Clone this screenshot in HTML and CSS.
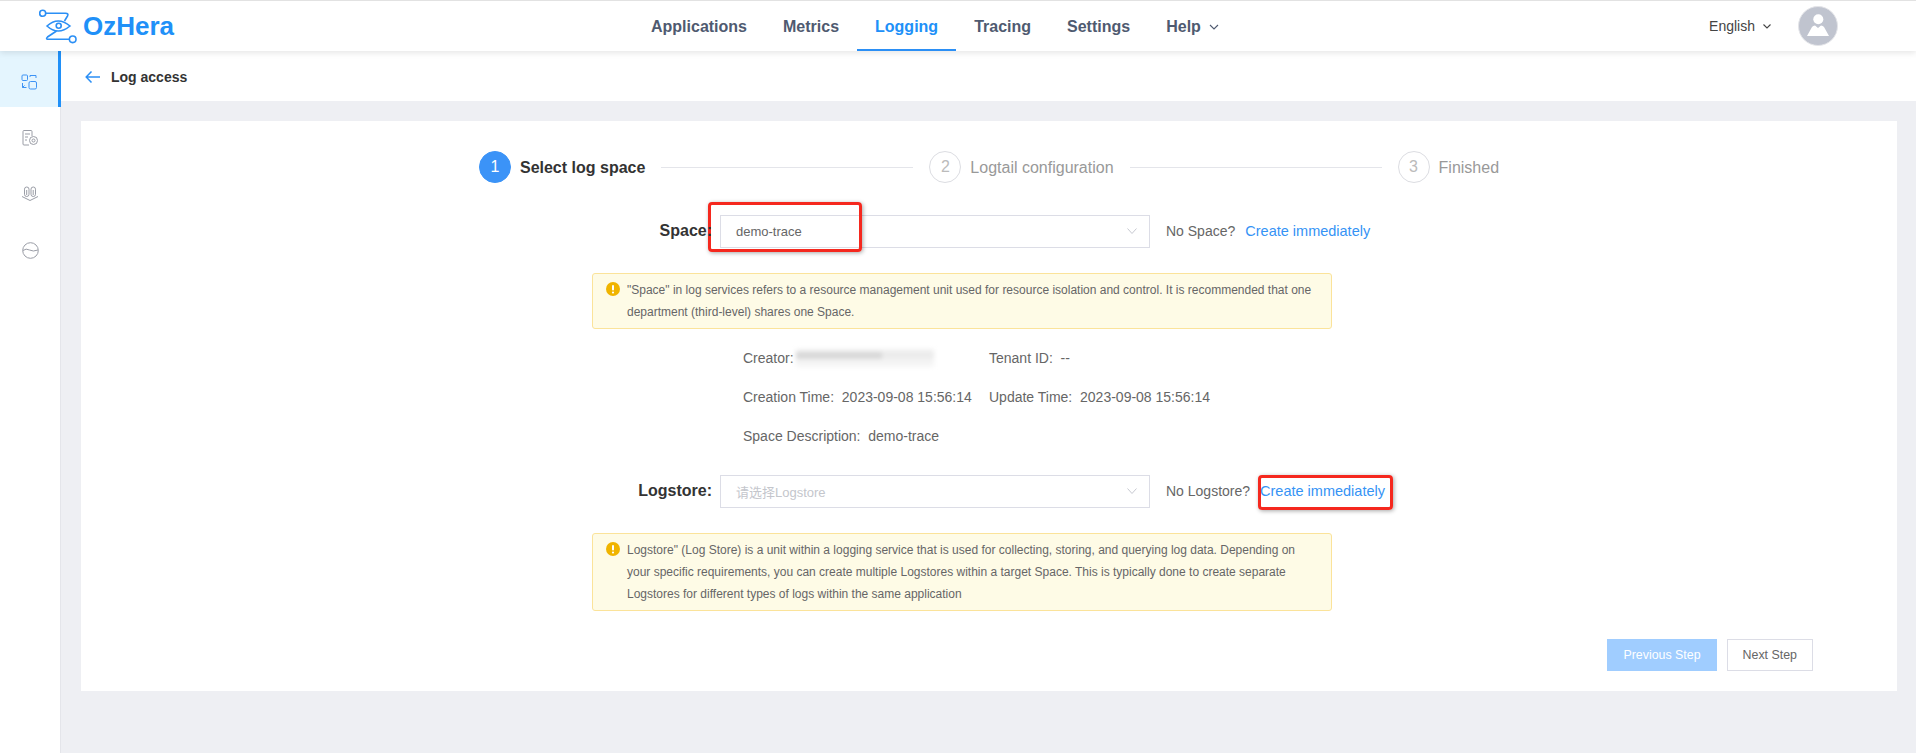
FILE: index.html
```html
<!DOCTYPE html>
<html lang="en">
<head>
  <meta charset="UTF-8">
  <title>Log access</title>
  <link rel="stylesheet" href="styles.css">
</head>
<body>

<header class="topbar">
  <div class="logo">
    <svg class="logo-mark" width="38" height="35" viewBox="0 0 38 35" fill="none" stroke="#2b8ff5" stroke-width="1.6">
      <circle cx="3.700" cy="4.300" r="3"/>
      <circle cx="33.700" cy="30.300" r="3.300"/>
      <path d="M6.700 4.300H26.500Q30 4.300 28.500 7L25.500 12"/>
      <path d="M30.400 30.300H10Q6 30.300 8.500 28L17.500 22"/>
      <path d="M8 17Q19 7 31 17Q19 27 8 17Z"/>
      <circle cx="19.700" cy="16.700" r="2.500"/>
    </svg>
    <span class="logo-text">OzHera</span>
  </div>
  <nav class="nav">
    <a class="nav-item" href="#">Applications</a>
    <a class="nav-item" href="#">Metrics</a>
    <a class="nav-item active" href="#">Logging</a>
    <a class="nav-item" href="#">Tracing</a>
    <a class="nav-item" href="#">Settings</a>
    <a class="nav-item" href="#">Help
      <svg class="chev" width="10" height="6" viewBox="0 0 10 6" fill="none" stroke="#4f5a70" stroke-width="1.100"><path d="M1 1l4 4 4-4"/></svg>
    </a>
  </nav>
  <div class="top-right">
    <span class="lang">English
      <svg class="chev" width="8" height="5" viewBox="0 0 8 5" fill="none" stroke="#444" stroke-width="1.100"><path d="M.5.5L4 4L7.500.5"/></svg>
    </span>
    <svg class="avatar" width="40" height="40" viewBox="0 0 40 40">
      <circle cx="20" cy="20" r="19.500" fill="#c0c4cf" stroke="#e3e4e8"/>
      <circle cx="20.300" cy="13.300" r="5" fill="#fff"/>
      <path d="M9 30L14 21Q15 19.500 17 19.500L20 22L23 19.500Q25 19.500 26 21L31 30Z" fill="#fff"/>
    </svg>
  </div>
</header>

<div class="shell">
  <aside class="sidebar">
    <div class="side-item active">
      <svg width="16" height="16" viewBox="0 0 16 16" fill="none" stroke="#3d93f5" stroke-width="1">
        <rect x="1" y="1" width="5.500" height="5.500" rx="1"/>
        <path d="M9 3V1.500H15V4"/>
        <path d="M1.500 9V13.500H5.500M3.500 11.500L1.500 13.500"/>
        <rect x="8" y="7.500" width="7.500" height="7.500" rx="1.500"/>
      </svg>
    </div>
    <div class="side-item">
      <svg width="16" height="16" viewBox="0 0 16 16" fill="none" stroke="#9a9da6" stroke-width="1">
        <path d="M10 6V1.500Q10 .5 9 .5H2Q1 .5 1 1.500V14Q1 15 2 15H7"/>
        <path d="M3 4H8M3 7H6M3 10H5"/>
        <circle cx="11.500" cy="10.500" r="4"/>
        <circle cx="11.500" cy="10.500" r="1.500"/>
      </svg>
    </div>
    <div class="side-item">
      <svg width="18" height="16" viewBox="0 0 18 16" fill="none" stroke="#9a9da6" stroke-width="1">
        <rect x="3.500" y="1" width="4.500" height="9.500" rx="2.200"/>
        <rect x="10" y="1" width="4.500" height="9.500" rx="2.200"/>
        <path d="M5.700 4V9M12.200 4V9"/>
        <path d="M1 10.500L9 14.500L17 10.500"/>
      </svg>
    </div>
    <div class="side-item">
      <svg width="17" height="17" viewBox="0 0 17 17" fill="none" stroke="#9a9da6" stroke-width="1">
        <circle cx="8.500" cy="8.500" r="7.800"/>
        <path d="M1 8.500Q4 6 7.500 8Q11 10 16 8"/>
      </svg>
    </div>
  </aside>

  <div class="content">
    <div class="subhead">
      <svg class="back" width="15" height="12" viewBox="0 0 15 12" fill="none" stroke="#2b8ff5" stroke-width="1.500"><path d="M15 6H1.500M6.500 .5L1.200 6L6.500 11.500"/></svg>
      <span class="subhead-title">Log access</span>
    </div>

    <div class="page">
      <main class="card">
        <div class="steps">
          <div class="step current"><span class="step-num">1</span><span class="step-text">Select log space</span></div>
          <div class="step-line"></div>
          <div class="step"><span class="step-num">2</span><span class="step-text">Logtail configuration</span></div>
          <div class="step-line"></div>
          <div class="step"><span class="step-num">3</span><span class="step-text">Finished</span></div>
        </div>

        <div class="form">
          <div class="form-row">
            <label class="form-label">Space:</label>
            <div class="select">
              <span>demo-trace</span>
              <svg width="10" height="6" viewBox="0 0 10 6" fill="none" stroke="#c6c8d0"><path d="M.5.5L5 5.500L9.500.5"/></svg>
            </div>
            <div class="form-hint">No Space?<a class="link" href="#">Create immediately</a></div>
            <span class="mark mark-space"></span>
          </div>

          <div class="alert">
            <svg class="alert-icon" width="14" height="14" viewBox="0 0 14 14"><circle cx="7" cy="7" r="7" fill="#f0b400"/><rect x="6" y="3" width="2" height="5.500" rx="1" fill="#fff"/><circle cx="7" cy="10.500" r="1.100" fill="#fff"/></svg>
            <p>"Space" in log services refers to a resource management unit used for resource isolation and control. It is recommended that one department (third-level) shares one Space.</p>
          </div>

          <div class="info">
            <div class="info-row">
              <div class="info-cell">Creator:<span class="blurred"></span></div>
              <div class="info-cell">Tenant ID:&nbsp; --</div>
            </div>
            <div class="info-row">
              <div class="info-cell">Creation Time:&nbsp; 2023-09-08 15:56:14</div>
              <div class="info-cell">Update Time:&nbsp; 2023-09-08 15:56:14</div>
            </div>
            <div class="info-row">
              <div class="info-cell">Space Description:&nbsp; demo-trace</div>
            </div>
          </div>

          <div class="form-row store-row">
            <label class="form-label">Logstore:</label>
            <div class="select disabled">
              <span>请选择Logstore</span>
              <svg width="10" height="6" viewBox="0 0 10 6" fill="none" stroke="#c6c8d0"><path d="M.5.5L5 5.500L9.500.5"/></svg>
            </div>
            <div class="form-hint">No Logstore?<a class="link" href="#">Create immediately</a></div>
            <span class="mark mark-store"></span>
          </div>

          <div class="alert">
            <svg class="alert-icon" width="14" height="14" viewBox="0 0 14 14"><circle cx="7" cy="7" r="7" fill="#f0b400"/><rect x="6" y="3" width="2" height="5.500" rx="1" fill="#fff"/><circle cx="7" cy="10.500" r="1.100" fill="#fff"/></svg>
            <p>Logstore" (Log Store) is a unit within a logging service that is used for collecting, storing, and querying log data. Depending on your specific requirements, you can create multiple Logstores within a target Space. This is typically done to create separate Logstores for different types of logs within the same application</p>
          </div>
        </div>

        <div class="actions">
          <button class="btn btn-prev">Previous Step</button>
          <button class="btn btn-next">Next Step</button>
        </div>
      </main>
    </div>
  </div>
</div>

</body>
</html>
```

FILE: styles.css
```css
* {
  box-sizing: border-box;
}

html, body {
  height: 100%;
}

body {
  margin: 0;
  font-family: "Liberation Sans", Arial, "Noto Sans CJK SC", sans-serif;
  font-size: 13px;
  color: #666;
  background: #eeeff3;
  overflow: hidden;
}

a {
  text-decoration: none;
}

.topbar {
  position: relative;
  z-index: 2;
  display: flex;
  align-items: center;
  height: 51px;
  background: #fff;
  border-top: 1px solid #e2e2e2;
  box-shadow: 0 2px 6px rgba(0, 0, 0, 0.1);
}

.logo {
  display: flex;
  align-items: center;
  width: 500px;
  padding-left: 39px;
}

.logo-mark {
  margin-right: 6px;
}

.logo-text {
  font-size: 26px;
  font-weight: bold;
  color: #2090f8;
}

.nav {
  display: flex;
  align-items: stretch;
  height: 50px;
  margin-left: 133px;
}

.nav-item {
  display: flex;
  align-items: center;
  padding: 3px 18px 0;
  font-size: 16px;
  font-weight: bold;
  color: #4f5a70;
  border-bottom: 2px solid transparent;
}

.nav-item.active {
  color: #2090f8;
  border-bottom-color: #2b8ff5;
}

.nav-item .chev {
  margin-left: 8px;
}

.top-right {
  display: flex;
  align-items: center;
  margin-left: auto;
  padding-right: 78px;
}

.lang {
  display: flex;
  align-items: center;
  font-size: 14px;
  color: #444;
  margin-right: 27px;
}

.lang .chev {
  margin-left: 8px;
}

.shell {
  display: flex;
  height: 702px;
}

.sidebar {
  width: 61px;
  flex-shrink: 0;
  background: #fff;
  border-right: 1px solid #e4e5ea;
}

.side-item {
  display: flex;
  align-items: center;
  justify-content: center;
  height: 56px;
  padding-top: 6px;
}

.side-item.active {
  background: #e4f5fe;
  border-right: 3px solid #2090f8;
  margin-right: -1px;
}

.content {
  flex: 1;
  min-width: 0;
}

.subhead {
  display: flex;
  align-items: center;
  height: 50px;
  padding: 1px 0 0 24px;
  background: #fff;
}

.back {
  margin-right: 11px;
}

.subhead-title {
  font-size: 14px;
  font-weight: bold;
  color: #333;
}

.page {
  padding: 20px 19px 0 20px;
}

.card {
  height: 570px;
  padding-top: 30px;
  background: #fff;
}

.steps {
  display: flex;
  align-items: center;
  justify-content: center;
}

.step {
  display: flex;
  align-items: center;
  color: #999;
  font-size: 16px;
}

.step-num {
  display: flex;
  align-items: center;
  justify-content: center;
  width: 32px;
  height: 32px;
  margin-right: 9px;
  border: 1px solid #dcdde2;
  border-radius: 50%;
  color: #bbb;
}

.step-text {
  padding-top: 1px;
}

.step.current {
  color: #333;
  font-weight: bold;
}

.step.current .step-num {
  background: #3b93f7;
  border-color: #3b93f7;
  color: #fff;
  font-weight: normal;
}

.step-line {
  width: 252px;
  height: 1px;
  margin: 0 16px;
  background: #e4e5ea;
}

.form {
  width: 810px;
  margin-left: 511px;
}

.form-row {
  position: relative;
  display: flex;
  align-items: center;
  height: 32px;
  margin-top: 32px;
}

.form-label {
  position: relative;
  z-index: 1;
  width: 128px;
  padding-right: 8px;
  text-align: right;
  font-size: 16px;
  font-weight: bold;
  color: #333;
}

.select {
  display: flex;
  align-items: center;
  justify-content: space-between;
  width: 430px;
  height: 33px;
  padding: 0 12px 0 15px;
  border: 1px solid #dcdde6;
  color: #666;
}

.select.disabled {
  color: #c4c6cc;
}

.form-hint {
  margin-left: 16px;
  font-size: 14px;
  white-space: nowrap;
}

.link {
  margin-left: 10px;
  font-size: 14.5px;
  color: #3593f5;
}

.mark {
  position: absolute;
  border: 3px solid #f5281e;
  border-radius: 4px;
  box-shadow: 1px 1px 4px rgba(0, 0, 0, 0.35);
  pointer-events: none;
}

.mark-space {
  left: 116px;
  top: -13px;
  width: 154px;
  height: 50px;
}

.mark-store {
  left: 666px;
  top: 0;
  width: 135px;
  height: 35px;
}

.alert {
  display: flex;
  width: 740px;
  margin-top: 26px;
  padding: 5px 12px 5px 13px;
  background: #fefbe6;
  border: 1px solid #fbe39a;
  border-radius: 3px;
  font-size: 12px;
  line-height: 22px;
}

.alert p {
  margin: 0;
  flex: 1;
}

.alert-icon {
  flex-shrink: 0;
  margin: 3px 7px 0 0;
}

.info {
  margin: 9px 0 0 151px;
  font-size: 14px;
}

.info-row {
  display: flex;
  height: 39px;
  align-items: center;
}

.info-cell {
  display: flex;
  align-items: center;
  width: 246px;
  white-space: pre;
}

.blurred {
  display: inline-block;
  width: 138px;
  height: 18px;
  margin-left: 2px;
  background:
    linear-gradient(90deg, rgba(205, 205, 205, 0.7) 0 62%, rgba(225, 225, 225, 0.4) 62% 100%) 0 3px / 100% 7px no-repeat,
    linear-gradient(#f1f1f1, #f6f6f6);
  filter: blur(2px);
}

.store-row {
  margin-top: 20px;
}

.actions {
  display: flex;
  justify-content: flex-end;
  gap: 10px;
  margin-top: 28px;
  padding-right: 84px;
}

.btn {
  height: 32px;
  padding: 0 15px;
  font-family: inherit;
  font-size: 12.4px;
  cursor: pointer;
}

.btn-prev {
  background: #a0cdff;
  border: 1px solid #a0cdff;
  color: #fff;
}

.btn-next {
  background: #fff;
  border: 1px solid #dcdde6;
  color: #666;
}
```
